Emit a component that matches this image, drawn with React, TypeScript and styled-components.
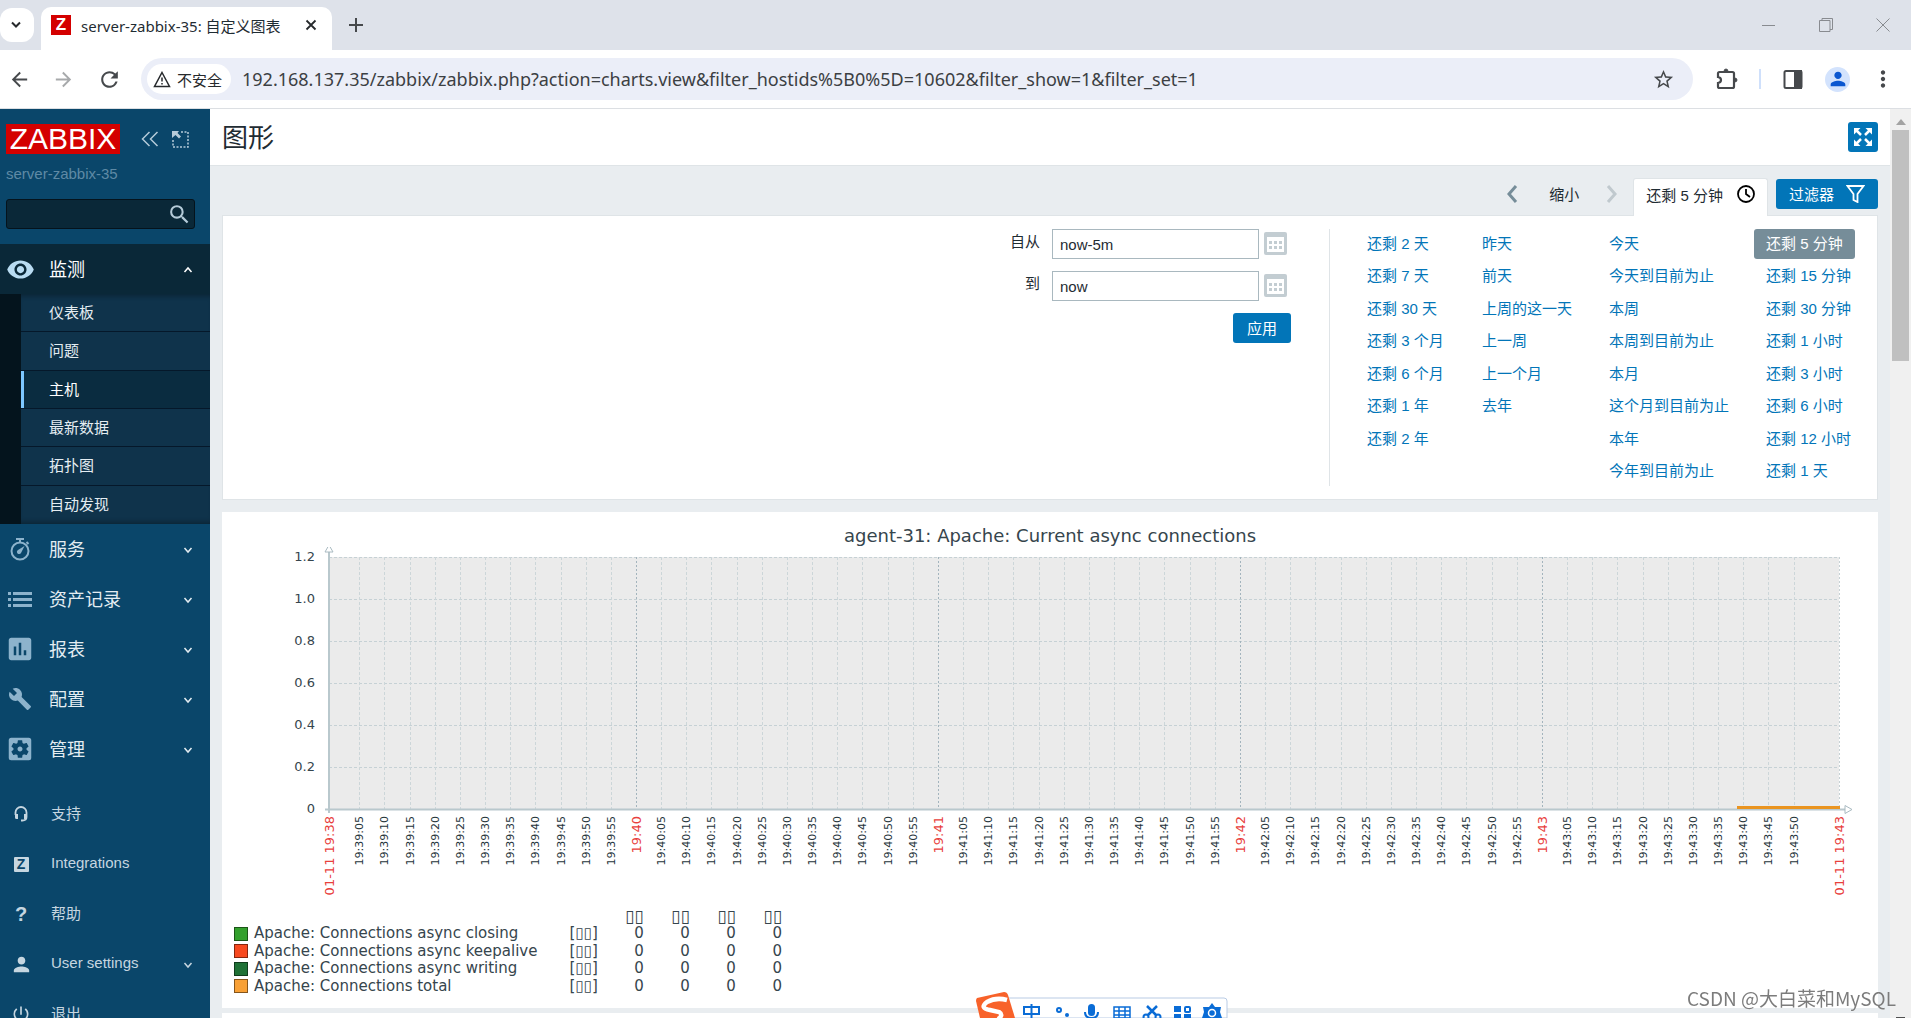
import React from "react";
import styled, { createGlobalStyle, css } from "styled-components";
import {
  MdArrowBack,
  MdArrowForward,
  MdRefresh,
  MdStarBorder,
  MdVisibility,
  MdAssessment,
  MdBuild,
  MdSettingsApplications,
  MdPerson,
  MdPowerSettingsNew,
  MdSearch,
  MdMoreVert,
} from "react-icons/md";

const cjk = '"Noto Sans CJK SC", sans-serif';
const arial = `"Liberation Sans", Arial, ${cjk}`;
const chromeFont = `"Noto Sans", "Segoe UI", ${cjk}`;
const graphFont = `"DejaVu Sans", ${cjk}`;

const c = {
  side: "#0a466a",
  sideDark: "#0a2838",
  sub: "#0f334b",
  subLine: "#05182a",
  blue: "#0275b8",
  text: "#1f2c33",
  border: "#dfe4e7",
  page: "#e9edf0",
  icon: "#8db3cc",
  graph: "#36454d",
};

const GlobalStyle = createGlobalStyle`
  * { box-sizing: border-box; }
  body { margin: 0; font-family: ${arial}; font-size: 15px; color: ${c.text}; overflow: hidden; }
  button, input { font: inherit; color: inherit; }
  button { border: 0; padding: 0; background: none; cursor: pointer; }
  ul { list-style: none; margin: 0; padding: 0; }
  a { text-decoration: none; color: inherit; }
  svg { display: block; flex: none; }
`;

const Window = styled.div`
  display: flex;
  flex-direction: column;
  height: 100vh;
`;

/* ---------- browser frame ---------- */

const TabStrip = styled.div`
  display: flex;
  align-items: flex-end;
  height: 50px;
  flex: none;
  background: #dee2ea;
  font-family: ${chromeFont};
`;

const TabSearch = styled.button`
  display: grid;
  place-items: center;
  width: 34px;
  height: 34px;
  margin: 0 7px 8px 0;
  padding-right: 2px;
  border-radius: 12px;
  background: #fff;
`;

const BrowserTab = styled.div`
  display: flex;
  align-items: center;
  width: 291px;
  height: 43px;
  padding: 0 14px 7px 10px;
  border-radius: 10px 10px 0 0;
  background: #fff;
`;

const Favicon = styled.span`
  display: grid;
  place-items: center;
  width: 20px;
  height: 20px;
  margin-right: 10px;
  background: #d40000;
  color: #fff;
  font: bold 17px/20px ${arial};
`;

const TabTitle = styled.span`
  flex: 1;
  font-size: 15px;
  white-space: nowrap;
`;

const NewTab = styled.button`
  width: 48px;
  height: 50px;
  display: grid;
  place-items: center;
`;

const WindowControls = styled.div`
  display: flex;
  margin-left: auto;
`;

const WindowControl = styled.button`
  display: grid;
  place-items: center;
  width: 57px;
  height: 50px;
`;

const Toolbar = styled.div`
  display: flex;
  align-items: center;
  height: 59px;
  flex: none;
  padding: 0 6px 0 4px;
  border-bottom: 1px solid #dcdfe3;
  background: #fff;
  color: #46494c;
  font-family: ${chromeFont};
`;

const ToolButton = styled.button<{ $dim?: boolean; $width?: number }>`
  display: grid;
  place-items: center;
  width: ${(p) => p.$width ?? 45}px;
  height: 40px;
  color: ${(p) => (p.$dim ? "#a7a9ab" : "#46494c")};
`;

const AddressBar = styled.div`
  display: flex;
  align-items: center;
  flex: 1;
  height: 42px;
  margin: 0 11px 0 15px;
  padding: 0 18px 0 6px;
  border-radius: 21px;
  background: #ebeef8;
`;

const SiteChip = styled.button`
  display: flex;
  align-items: center;
  gap: 6px;
  height: 30px;
  margin-right: 11px;
  padding: 0 9px 0 6px;
  border-radius: 15px;
  background: #fff;
  color: #26292c;
  font-size: 15px;
  white-space: nowrap;
`;

const UrlInput = styled.input`
  flex: 1;
  min-width: 0;
  padding: 0;
  border: 0;
  outline: 0;
  background: none;
  color: #3c4043;
  font-size: 18px;
`;

const ToolDivider = styled.span`
  width: 2px;
  height: 20px;
  margin: 0 9px;
  background: #cfe0fb;
`;

const Avatar = styled.button`
  display: grid;
  place-items: center;
  width: 25px;
  height: 25px;
  margin: 0 10px;
  border-radius: 50%;
  background: #d3e3fd;
  color: #0b57d0;
`;

/* ---------- sidebar ---------- */

const Body = styled.div`
  display: flex;
  flex: 1;
  min-height: 0;
`;

const Sidebar = styled.aside`
  width: 210px;
  flex: none;
  padding-top: 15px;
  overflow: hidden;
  background: ${c.side};
  color: #fff;
`;

const LogoRow = styled.div`
  display: flex;
  align-items: center;
  padding-left: 6px;
`;

const Logo = styled.a`
  width: 114px;
  height: 30px;
  margin-right: 15px;
  background: #d40000;
  color: #fff;
  font-size: 30px;
  line-height: 30px;
  text-align: center;
`;

const SideTool = styled.button`
  display: grid;
  place-items: center;
  width: 30px;
  height: 30px;
  color: #b5cbd9;
`;

const ServerName = styled.div`
  margin: 10px 6px 15px;
  line-height: 20px;
  color: #5f8aa5;
`;

const SearchBox = styled.form`
  display: flex;
  align-items: center;
  height: 30px;
  margin: 0 15px 15px 6px;
  border: 1px solid #05131c;
  border-radius: 3px;
  background: ${c.sideDark};
  color: #8db3cc;
`;

const SearchInput = styled.input`
  flex: 1;
  min-width: 0;
  height: 28px;
  padding: 0 8px;
  border: 0;
  outline: 0;
  background: none;
`;

const MenuButton = styled.button<{ $open?: boolean; $small?: boolean }>`
  display: flex;
  align-items: center;
  width: 100%;
  height: 50px;
  padding: 0 16px 0 ${(p) => (p.$small ? 6 : 5)}px;
  background: ${(p) => (p.$open ? c.sideDark : "transparent")};
  color: ${(p) => (p.$small ? "#c6d6e0" : p.$open ? "#fff" : "#e4edf2")};
  font-size: ${(p) => (p.$small ? 15 : 18)}px;
  text-align: left;
`;

const MenuIcon = styled.span<{ $open?: boolean; $small?: boolean }>`
  display: grid;
  place-items: center;
  width: 30px;
  height: 30px;
  margin-right: ${(p) => (p.$small ? 15 : 14)}px;
  color: ${(p) => (p.$small ? "#c6d6e0" : p.$open ? "#b9dcf2" : c.icon)};
`;

const MenuLabel = styled.span`
  flex: 1;
  padding-bottom: 3px;
`;

const SubMenu = styled.ul`
  display: grid;
  grid-auto-rows: 1fr;
  height: 230px;
  padding-left: 21px;
  background: #04141d;
`;

const SubItem = styled.li<{ $active?: boolean }>`
  display: flex;
  border-bottom: 1px solid ${c.subLine};
  background: ${c.sub};
  color: #e4edf2;

  &:last-child {
    border-bottom: 0;
    box-shadow: inset 0 -5px 5px -3px rgba(0, 0, 0, 0.3);
  }
  &:first-child {
    box-shadow: inset 0 5px 5px -3px rgba(0, 0, 0, 0.3);
  }
  ${(p) =>
    p.$active &&
    css`
      background: #0a2c40;
      color: #fff;
    `}
`;

const SubLink = styled.a<{ $active?: boolean }>`
  display: flex;
  align-items: center;
  flex: 1;
  padding: 0 0 2px 25px;
  border-left: 3px solid ${(p) => (p.$active ? "#7dc7ff" : "transparent")};
`;

const UserMenu = styled.nav`
  margin-top: 15px;
`;

const LetterIcon = styled.span<{ $boxed?: boolean }>`
  display: grid;
  place-items: center;
  width: 15px;
  height: 15px;
  border-radius: 1px;
  font-weight: bold;
  font-size: ${(p) => (p.$boxed ? 14 : 20)}px;
  line-height: 15px;
  background: ${(p) => (p.$boxed ? "#c6d6e0" : "transparent")};
  color: ${(p) => (p.$boxed ? c.side : "#c6d6e0")};
`;

/* ---------- main ---------- */

const Main = styled.main`
  flex: 1;
  min-width: 0;
  overflow: hidden;
  background: ${c.page};
`;

const PageHeader = styled.header`
  display: flex;
  align-items: center;
  justify-content: space-between;
  height: 57px;
  padding: 0 12px;
  border-bottom: 1px solid ${c.border};
  background: #fff;
`;

const PageTitle = styled.h1`
  margin: 0;
  padding-top: 2px;
  font-size: 26px;
  font-weight: 400;
  line-height: 30px;
`;

const KioskButton = styled.button`
  display: grid;
  place-items: center;
  width: 30px;
  height: 30px;
  border-radius: 3px;
  background: ${c.blue};
`;

const FilterBar = styled.div`
  display: flex;
  align-items: flex-start;
  justify-content: flex-end;
  height: 49px;
  padding: 12px 12px 0;
`;

const RangeButton = styled.button`
  display: grid;
  place-items: center;
  width: 34px;
  height: 31px;
`;

const ZoomOut = styled.button`
  height: 31px;
  margin: 0 16px 0 20px;
  padding-bottom: 1px;
`;

const TimeTab = styled.button`
  position: relative;
  z-index: 1;
  display: flex;
  align-items: center;
  gap: 14px;
  height: 38px;
  margin: 0 8px 0 4px;
  padding: 0 12px 7px;
  border: 1px solid ${c.border};
  border-bottom: 0;
  border-radius: 3px 3px 0 0;
  background: #fff;
`;

const PrimaryButton = styled.button`
  display: flex;
  align-items: center;
  gap: 12px;
  height: 30px;
  padding: 0 14px 1px;
  border-radius: 3px;
  background: ${c.blue};
  color: #fff;
`;

const FilterButton = styled(PrimaryButton)`
  margin-top: 1px;
  padding: 0 13px 1px;
`;

const FilterPanel = styled.section`
  display: flex;
  margin: 0 12px 12px;
  padding: 13px 21px 13px 0;
  border: 1px solid ${c.border};
  background: #fff;
`;

const RangeForm = styled.form`
  display: flex;
  flex: 1;
  flex-direction: column;
  align-items: flex-end;
  padding-right: 38px;
`;

const Field = styled.div`
  display: flex;
  align-items: flex-start;
  height: 30px;
  margin-bottom: 12px;
  padding-right: 4px;
`;

const FieldLabel = styled.label`
  margin-right: 12px;
  line-height: 26px;
`;

const FieldInput = styled.input`
  width: 207px;
  height: 30px;
  margin-right: 5px;
  padding: 0 7px;
  border: 1px solid #a9b8bf;
  outline: 0;
  background: #fff;
`;

const CalendarButton = styled.button`
  margin-top: 3px;
`;

const Presets = styled.div`
  display: grid;
  grid-template-columns: 115px 127px 157px 102px;
  height: 257px;
  padding-left: 25px;
  box-sizing: content-box;
  border-left: 1px solid ${c.border};
`;

const PresetColumn = styled.ul`
  display: grid;
  grid-template-rows: repeat(8, 30px);
  align-content: space-between;
  justify-items: start;
`;

const PresetLink = styled.a<{ $selected?: boolean }>`
  display: block;
  height: 30px;
  padding: 0 12px;
  border-radius: 3px;
  line-height: 30px;
  white-space: nowrap;
  background: ${(p) => (p.$selected ? "#768d99" : "transparent")};
  color: ${(p) => (p.$selected ? "#fff" : c.blue)};
`;

const GraphCard = styled.section`
  margin: 0 12px 5px;
  padding: 12px 0 13px;
  background: #fff;
  color: ${c.graph};
  font-family: ${graphFont};
`;

const NextGraphCard = styled.section`
  height: 200px;
  margin: 0 12px;
  background: #fff;
`;

const GraphTitle = styled.h2`
  margin: 0;
  font-size: 18px;
  font-weight: 400;
  line-height: 23px;
  text-align: center;
`;

const Plot = styled.svg`
  width: 100%;
  height: auto;
`;

const Legend = styled.table`
  table-layout: fixed;
  width: 548px;
  height: 87px;
  margin: 9px 0 0 12px;
  border-collapse: collapse;
  font-size: 15px;
  line-height: 17px;
`;

const LegendHead = styled.th<{ $width: number }>`
  width: ${(p) => p.$width}px;
  padding: 0;
  font-size: 17px;
  font-weight: 400;
  text-align: right;
  white-space: nowrap;
`;

const LegendCell = styled.td<{ $end?: boolean }>`
  padding: 0;
  text-align: ${(p) => (p.$end ? "right" : "left")};
  white-space: nowrap;
`;

const LegendName = styled.span`
  display: flex;
  align-items: center;
  gap: 6px;
`;

const Swatch = styled.span<{ $fill: string; $edge: string }>`
  width: 14px;
  height: 14px;
  border: 1px solid ${(p) => p.$edge};
  background: ${(p) => p.$fill};
`;

const ScrollTrack = styled.div`
  display: flex;
  flex-direction: column;
  align-items: center;
  justify-content: space-between;
  width: 21px;
  flex: none;
  background: #f0f0f0;
`;

const ScrollThumb = styled.div`
  width: 17px;
  height: 231px;
  margin: 0 auto;
  background: #c0c0c0;
`;

const ScrollUp = styled.div`
  display: grid;
  place-items: center;
  width: 21px;
  height: 21px;
  padding-top: 4px;
`;

const ScrollDown = styled.div`
  width: 9px;
  height: 1px;
  background: #505050;
`;

/* ---------- overlays ---------- */

const Watermark = styled.div`
  position: fixed;
  right: 15px;
  bottom: 5px;
  color: rgba(80, 80, 80, 0.75);
  font-family: ${cjk};
  font-size: 19px;
  line-height: 30px;
  text-shadow: 0 0 1px #fff;
`;

const ImeBar = styled.div`
  position: fixed;
  left: 976px;
  bottom: 0;
  width: 252px;
  height: 26px;
  overflow: hidden;
`;

/* ---------- drawings ---------- */

const Chevron = ({ up }: { up?: boolean }) => (
  <svg width="12" height="12" viewBox="0 0 12 12" fill="none" stroke="currentColor" strokeWidth="1.500">
    <path d={up ? "M2.500 9 6 5l3.500 4" : "M2.500 5 6 9l3.500-4"} />
  </svg>
);

const CalendarIcon = () => (
  <svg width="23" height="23" viewBox="0 0 23 23">
    <rect width="23" height="23" rx="2" fill="#c3cdd2" />
    <rect x="3" y="5" width="17" height="15" fill="#fff" />
    {[5, 10, 15].map((x) =>
      [9, 14].map((y) => <rect key={`${x}-${y}`} x={x} y={y} width="3" height="3" fill="#c3cdd2" />)
    )}
  </svg>
);

const StopwatchIcon = () => (
  <svg width="24" height="26" viewBox="0 0 24 26" fill="none" stroke="currentColor">
    <circle cx="12" cy="15" r="8.500" strokeWidth="2" />
    <path d="M8 3h8M12 3v4M18.500 6l2 2" strokeWidth="2" />
    <path d="m16.500 10-6.500 4a2.200 2.200 0 1 0 3 3z" fill="currentColor" stroke="none" />
  </svg>
);

const ListIcon = () => (
  <svg width="24" height="15" viewBox="0 0 24 15" fill="currentColor">
    {[0, 6, 12].map((y) => (
      <g key={y}>
        <rect y={y} width="3" height="3" />
        <rect x="5" y={y} width="19" height="3" />
      </g>
    ))}
  </svg>
);

const HeadsetIcon = () => (
  <svg width="14" height="16" viewBox="0 0 14 16" fill="none" stroke="currentColor" strokeWidth="1.800">
    <path d="M1.500 9V6.500a5.500 5.500 0 0 1 11 0V11q0 3.500-4 3.500H7" />
    <path d="M1 8h3v5H2.500Q1 13 1 11.500zM13 8h-3v5h1.500q1.500 0 1.500-1.500z" fill="currentColor" stroke="none" />
  </svg>
);

const KioskIcon = () => (
  <svg width="18" height="18" viewBox="0 0 18 18" fill="#fff" stroke="#fff">
    {[0, 90, 180, 270].map((r) => (
      <g key={r} transform={`rotate(${r} 9 9)`}>
        <path d="M0 0h6.500L0 6.500z" stroke="none" />
        <path d="m2 2 5 5" strokeWidth="2.500" />
      </g>
    ))}
  </svg>
);

const ImeLogo = () => (
  <svg width="252" height="26" viewBox="0 0 252 26" fill="none" stroke="#0a6cd6" strokeWidth="2">
    <path d="M30 6h218q3 0 3 3v17H36z" fill="#fff" stroke="#b9cbe4" strokeWidth="1" />
    <path d="M1 6 28 0q3 0 4 3l7 23H4L0 9q0-2 1-3z" fill="#f8622a" stroke="none" />
    <path d="M31 8Q20 5 11 10q-8 6 3 8l9 2q5 3-1 7" stroke="#fff" strokeWidth="4.500" />
    <path d="M48 15h15v7H48zM55.500 12v14" />
    <circle cx="83" cy="18" r="2" />
    <circle cx="91" cy="23" r="2" fill="#0a6cd6" stroke="none" />
    <rect x="112" y="12" width="7" height="12" rx="3.500" fill="#0a6cd6" stroke="none" />
    <path d="M109 20q0 6 6.500 6t6.500-6" />
    <path d="M138 15h16v11h-16zM138 19h16M138 23h16M143 15v11M149 15v11" strokeWidth="1.500" />
    <path d="m171 14 9 9M181 14l-9 9" strokeWidth="2.500" />
    <circle cx="170" cy="25" r="2.500" />
    <circle cx="182" cy="25" r="2.500" />
    <path d="M198 14h7v6h-7zM198 22h7v4h-7zM208 22h7v4h-7z" fill="#0a6cd6" stroke="none" />
    <rect x="209" y="15" width="5" height="5" rx="1" />
    <path d="m236 11 3 4h6l-1 5 2 6h-20l2-6-1-5h6z" fill="#0a6cd6" stroke="none" />
    <circle cx="236" cy="21" r="3.500" stroke="#fff" strokeWidth="1.500" />
  </svg>
);

/* ---------- graph ---------- */

const X0 = 107;
const X1 = 1617;
const Y0 = 10;
const Y1 = 262;
const FIRST_MINUTE = 414;
const STEP = 25.165;

const ticks = Array.from({ length: 58 }, (_, i) => i - 11);

const tickLabel = (i: number) => {
  const total = 40 * 60 + i * 5;
  const minute = Math.floor(total / 60);
  const second = total % 60;
  return second === 0 ? `19:${minute}` : `19:${minute}:${String(second).padStart(2, "0")}`;
};

const VerticalLabel = ({ x, red, children }: { x: number; red?: boolean; children: string }) => (
  <text
    transform={`translate(${x + (red ? 5 : 4)} 269) rotate(-90)`}
    textAnchor="end"
    fontSize={red ? 13 : 11}
    fill={red ? "#e8403c" : "#26343b"}
  >
    {children}
  </text>
);

const GraphPlot = () => (
  <Plot viewBox="0 0 1656 352" role="img" aria-label="agent-31: Apache: Current async connections">
    <rect x={X0} y={Y0} width={X1 - X0} height={Y1 - Y0} fill="#ebebeb" />
    {["1.2", "1.0", "0.8", "0.6", "0.4", "0.2", "0"].map((label, i) => {
      const y = Math.round(Y0 + i * 42) + 0.5;
      return (
        <g key={label}>
          {i < 6 && <line x1={X0} x2={X1} y1={y} y2={y} stroke="#c6d1d5" strokeDasharray="3 2" />}
          <text x="93" y={y + 3.5} textAnchor="end" fontSize="13" fill={c.graph}>
            {label}
          </text>
        </g>
      );
    })}
    {ticks.map((i) => {
      const x = Math.round(FIRST_MINUTE + i * STEP);
      const major = i % 12 === 0;
      return (
        <g key={i}>
          <line
            x1={x + 0.5}
            x2={x + 0.5}
            y1={Y0}
            y2={Y1}
            stroke={major ? "#a3b4bd" : "#ccd6d9"}
            strokeDasharray={major ? "2 2" : "3 2"}
          />
          <VerticalLabel x={x} red={major}>
            {tickLabel(i)}
          </VerticalLabel>
        </g>
      );
    })}
    <line x1={X1 + 0.5} x2={X1 + 0.5} y1={Y0} y2={Y1} stroke="#c6d1d5" strokeDasharray="2 2" />
    <VerticalLabel x={X0} red>01-11 19:38</VerticalLabel>
    <VerticalLabel x={X1} red>01-11 19:43</VerticalLabel>
    <path d="M107 4v262M103 262.500h1520" stroke="#b9c8cd" strokeWidth="2" />
    <path d="m107-2 4 7h-8zM1623 258.500v8l7-4z" fill="#fff" stroke="#a9bac1" />
    <rect x="1515" y="259" width="103" height="3" fill="#ea9420" />
  </Plot>
);

const mainMenu = [
  { label: "服务", icon: <StopwatchIcon /> },
  { label: "资产记录", icon: <ListIcon /> },
  { label: "报表", icon: <MdAssessment size={30} /> },
  { label: "配置", icon: <MdBuild size={24} /> },
  { label: "管理", icon: <MdSettingsApplications size={30} /> },
];

const userMenu = [
  { label: "支持", icon: <HeadsetIcon /> },
  { label: "Integrations", icon: <LetterIcon $boxed>Z</LetterIcon> },
  { label: "帮助", icon: <LetterIcon>?</LetterIcon> },
  { label: "User settings", icon: <MdPerson size={23} />, expands: true },
  { label: "退出", icon: <MdPowerSettingsNew size={20} /> },
];

const presets = [
  ["还剩 2 天", "还剩 7 天", "还剩 30 天", "还剩 3 个月", "还剩 6 个月", "还剩 1 年", "还剩 2 年"],
  ["昨天", "前天", "上周的这一天", "上一周", "上一个月", "去年"],
  ["今天", "今天到目前为止", "本周", "本周到目前为止", "本月", "这个月到目前为止", "本年", "今年到目前为止"],
  ["还剩 5 分钟", "还剩 15 分钟", "还剩 30 分钟", "还剩 1 小时", "还剩 3 小时", "还剩 6 小时", "还剩 12 小时", "还剩 1 天"],
];

const series = [
  { name: "Apache: Connections async closing", fill: "#33a02c", edge: "#1b5517" },
  { name: "Apache: Connections async keepalive", fill: "#f7491f", edge: "#85260f" },
  { name: "Apache: Connections async writing", fill: "#1f7136", edge: "#103c1c" },
  { name: "Apache: Connections total", fill: "#f8a035", edge: "#85551b" },
];

const BrowserFrame = () => (
  <>
    <TabStrip>
      <TabSearch aria-label="搜索标签页">
        <svg width="12" height="8" viewBox="0 0 12 8" fill="none" stroke="#26292c" strokeWidth="2">
          <path d="m2 1.500 4 4 4-4" />
        </svg>
      </TabSearch>
      <BrowserTab>
        <Favicon>Z</Favicon>
        <TabTitle>server-zabbix-35: 自定义图表</TabTitle>
        <button aria-label="关闭">
          <svg width="14" height="14" viewBox="0 0 14 14" stroke="#26292c" strokeWidth="1.800">
            <path d="m2.500 2.500 9 9M11.500 2.500l-9 9" />
          </svg>
        </button>
      </BrowserTab>
      <NewTab aria-label="新标签页">
        <svg width="14" height="14" viewBox="0 0 14 14" stroke="#46494c" strokeWidth="2">
          <path d="M7 0v14M0 7h14" />
        </svg>
      </NewTab>
      <WindowControls>
        <WindowControl aria-label="最小化">
          <svg width="13" height="13" viewBox="0 0 13 13" stroke="#888b90"><path d="M0 6.500h13" /></svg>
        </WindowControl>
        <WindowControl aria-label="还原">
          <svg width="14" height="14" viewBox="0 0 14 14" fill="none" stroke="#888b90">
            <path d="M.5 2.500h10.500v11H.5zM3 2.500v-2h10.500v11H11" />
          </svg>
        </WindowControl>
        <WindowControl aria-label="关闭窗口">
          <svg width="14" height="14" viewBox="0 0 14 14" stroke="#888b90"><path d="m.5.5 13 13M13.500.5l-13 13" /></svg>
        </WindowControl>
      </WindowControls>
    </TabStrip>
    <Toolbar>
      <ToolButton $width={30} aria-label="后退"><MdArrowBack size={23} /></ToolButton>
      <ToolButton $width={58} $dim aria-label="前进"><MdArrowForward size={23} /></ToolButton>
      <ToolButton $width={34} aria-label="刷新"><MdRefresh size={25} /></ToolButton>
      <AddressBar>
        <SiteChip>
          <svg width="18" height="17" viewBox="0 0 18 17" fill="none" stroke="#26292c" strokeWidth="1.500">
            <path d="M9 1.500 16.500 15.500h-15zM9 6.500v4M9 12v1.500" />
          </svg>
          不安全
        </SiteChip>
        <UrlInput
          aria-label="地址"
          readOnly
          value="192.168.137.35/zabbix/zabbix.php?action=charts.view&filter_hostids%5B0%5D=10602&filter_show=1&filter_set=1"
        />
        <MdStarBorder size={23} />
      </AddressBar>
      <ToolButton $width={46} aria-label="扩展程序">
        <svg width="24" height="24" viewBox="0 0 24 24" fill="none" stroke="#46494c" strokeWidth="2.200">
          <path d="M4.500 5h13q1.500 0 1.500 1.500v13q0 1.500-1.500 1.500h-13Q3 21 3 19.500V16q3-.5 3-3t-3-3V6.500Q3 5 4.500 5z" />
          <path d="M9 4.500q0-2.500 2-2.500t2 2.500zM19.500 11q2.500 0 2.500 2t-2.500 2z" fill="#46494c" strokeWidth="1" />
        </svg>
      </ToolButton>
      <ToolDivider />
      <ToolButton aria-label="侧边栏">
        <svg width="20" height="19" viewBox="0 0 20 19" fill="none" stroke="#46494c" strokeWidth="2">
          <rect x="1.500" y="1" width="17" height="17" rx="1.500" />
          <path d="M12 1h6v17h-6z" fill="#46494c" />
        </svg>
      </ToolButton>
      <Avatar aria-label="用户"><MdPerson size={22} /></Avatar>
      <ToolButton aria-label="更多"><MdMoreVert size={26} /></ToolButton>
    </Toolbar>
  </>
);

const SideNav = () => (
  <Sidebar>
    <LogoRow>
      <Logo href="#">ZABBIX</Logo>
      <SideTool aria-label="折叠">
        <svg width="18" height="16" viewBox="0 0 18 16" fill="none" stroke="currentColor" strokeWidth="1.500">
          <path d="M8.500 1 1.500 8l7 7M16.500 1l-7 7 7 7" />
        </svg>
      </SideTool>
      <SideTool aria-label="隐藏">
        <svg width="17" height="17" viewBox="0 0 17 17" fill="none" stroke="currentColor" strokeWidth="1.500">
          <path d="M9 1h7v15H1V9" strokeDasharray="2 1.500" />
          <path d="M0 0h7L5.500 2 9 5.500 7 7.500 3.500 4 0 7z" fill="currentColor" stroke="none" />
        </svg>
      </SideTool>
    </LogoRow>
    <ServerName>server-zabbix-35</ServerName>
    <SearchBox>
      <SearchInput aria-label="搜索" />
      <SideTool type="button" aria-label="搜索"><MdSearch size={25} /></SideTool>
    </SearchBox>
    <nav>
      <MenuButton $open>
        <MenuIcon $open><MdVisibility size={29} /></MenuIcon>
        <MenuLabel>监测</MenuLabel>
        <Chevron up />
      </MenuButton>
      <SubMenu>
        {["仪表板", "问题", "主机", "最新数据", "拓扑图", "自动发现"].map((label) => (
          <SubItem key={label} $active={label === "主机"}>
            <SubLink href="#" $active={label === "主机"}>{label}</SubLink>
          </SubItem>
        ))}
      </SubMenu>
      {mainMenu.map((item) => (
        <MenuButton key={item.label}>
          <MenuIcon>{item.icon}</MenuIcon>
          <MenuLabel>{item.label}</MenuLabel>
          <Chevron />
        </MenuButton>
      ))}
    </nav>
    <UserMenu>
      {userMenu.map((item) => (
        <MenuButton key={item.label} $small>
          <MenuIcon $small>{item.icon}</MenuIcon>
          <MenuLabel>{item.label}</MenuLabel>
          {item.expands && <Chevron />}
        </MenuButton>
      ))}
    </UserMenu>
  </Sidebar>
);

const TimeFilter = () => (
  <>
    <FilterBar>
      <RangeButton aria-label="向前">
        <svg width="12" height="20" viewBox="0 0 12 20" fill="none" stroke="#768d99" strokeWidth="3">
          <path d="m10 2-7 8 7 8" />
        </svg>
      </RangeButton>
      <ZoomOut>缩小</ZoomOut>
      <RangeButton aria-label="向后">
        <svg width="12" height="20" viewBox="0 0 12 20" fill="none" stroke="#c0c9ce" strokeWidth="3">
          <path d="m2 2 7 8-7 8" />
        </svg>
      </RangeButton>
      <TimeTab>
        还剩 5 分钟
        <svg width="18" height="18" viewBox="0 0 18 18" fill="none" stroke="#000" strokeWidth="1.800">
          <circle cx="9" cy="9" r="8" />
          <path d="M9 4v5l4 3" />
        </svg>
      </TimeTab>
      <FilterButton>
        过滤器
        <svg width="19" height="18" viewBox="0 0 19 18" fill="none" stroke="#fff" strokeWidth="1.800">
          <path d="M1.500 1h16L11.500 9v8l-4-2V9z" />
        </svg>
      </FilterButton>
    </FilterBar>
    <FilterPanel>
      <RangeForm>
        <Field>
          <FieldLabel htmlFor="from">自从</FieldLabel>
          <FieldInput id="from" defaultValue="now-5m" />
          <CalendarButton type="button" aria-label="选择开始时间"><CalendarIcon /></CalendarButton>
        </Field>
        <Field>
          <FieldLabel htmlFor="to">到</FieldLabel>
          <FieldInput id="to" defaultValue="now" />
          <CalendarButton type="button" aria-label="选择结束时间"><CalendarIcon /></CalendarButton>
        </Field>
        <PrimaryButton type="button">应用</PrimaryButton>
      </RangeForm>
      <Presets>
        {presets.map((column) => (
          <PresetColumn key={column[0]}>
            {column.map((label) => (
              <li key={label}>
                <PresetLink href="#" $selected={label === "还剩 5 分钟"}>{label}</PresetLink>
              </li>
            ))}
          </PresetColumn>
        ))}
      </Presets>
    </FilterPanel>
  </>
);

const Graph = () => (
  <GraphCard>
    <GraphTitle>agent-31: Apache: Current async connections</GraphTitle>
    <GraphPlot />
    <Legend>
      <thead>
        <tr>
          <LegendHead $width={335} />
          <LegendHead $width={28} />
          {[0, 1, 2, 3].map((i) => (
            <LegendHead key={i} $width={46}>▯▯</LegendHead>
          ))}
        </tr>
      </thead>
      <tbody>
        {series.map((s) => (
          <tr key={s.name}>
            <LegendCell>
              <LegendName>
                <Swatch $fill={s.fill} $edge={s.edge} />
                {s.name}
              </LegendName>
            </LegendCell>
            <LegendCell>[▯▯]</LegendCell>
            {[0, 1, 2, 3].map((i) => (
              <LegendCell key={i} $end>0</LegendCell>
            ))}
          </tr>
        ))}
      </tbody>
    </Legend>
  </GraphCard>
);

export default function App() {
  return (
    <Window>
      <GlobalStyle />
      <BrowserFrame />
      <Body>
        <SideNav />
        <Main>
          <PageHeader>
            <PageTitle>图形</PageTitle>
            <KioskButton aria-label="全屏"><KioskIcon /></KioskButton>
          </PageHeader>
          <TimeFilter />
          <Graph />
          <NextGraphCard />
        </Main>
        <ScrollTrack>
          <div>
            <ScrollUp>
              <svg width="10" height="6" viewBox="0 0 10 6"><path d="M5 0 10 6H0z" fill="#a3a3a3" /></svg>
            </ScrollUp>
            <ScrollThumb />
          </div>
          <ScrollDown />
        </ScrollTrack>
      </Body>
      <ImeBar><ImeLogo /></ImeBar>
      <Watermark>CSDN @大白菜和MySQL</Watermark>
    </Window>
  );
}
